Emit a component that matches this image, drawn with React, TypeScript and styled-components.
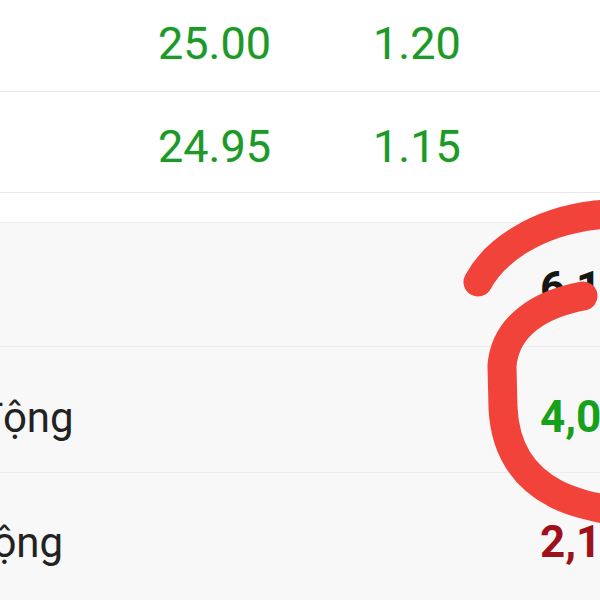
import React from "react";
import styled, { createGlobalStyle } from "styled-components";

const GlobalStyle = createGlobalStyle`
  html, body {
    margin: 0;
    padding: 0;
    background: #ffffff;
    overflow: hidden;
  }
  body {
    font-family: Roboto, "Liberation Sans", sans-serif;
  }
`;

const Screen = styled.div`
  position: relative;
  width: 600px;
  height: 600px;
  overflow: hidden;
  background: #ffffff;
`;

const QuoteTable = styled.div`
  display: flex;
  flex-direction: column;
  background: #ffffff;
`;

const QuoteRow = styled.div<{ $height: number; $padTop: number }>`
  display: grid;
  grid-template-columns: 158px 215px 1fr;
  box-sizing: border-box;
  height: ${({ $height }) => $height}px;
  padding-top: ${({ $padTop }) => $padTop}px;
  border-bottom: 1px solid #e9e9e9;
`;

const PriceCell = styled.span<{ $col: number }>`
  grid-column: ${({ $col }) => $col};
  font-size: 45px;
  line-height: normal;
  color: #1f972a;
  white-space: nowrap;
  text-shadow: 0 0 2px rgba(120, 230, 120, 0.45);
`;

const SectionGap = styled.div`
  height: 29px;
  background: #ffffff;
`;

const SummaryPanel = styled.div`
  display: flex;
  flex-direction: column;
  background: #f8f8f8;
  border-top: 1px solid #ececec;
  min-height: 400px;
`;

const SummaryRow = styled.div<{ $height: number; $padTop: number; $last?: boolean }>`
  display: grid;
  grid-template-columns: 74px 466px 1fr;
  align-items: baseline;
  box-sizing: border-box;
  height: ${({ $height }) => $height}px;
  padding-top: ${({ $padTop }) => $padTop}px;
  border-bottom: ${({ $last }) => ($last ? "none" : "1px solid #ececec")};
`;

const LabelClip = styled.div`
  display: flex;
  justify-content: flex-end;
  overflow: hidden;
`;

const LabelText = styled.span`
  flex: none;
  width: 268px;
  font-size: 42px;
  color: #222222;
  white-space: nowrap;
`;

const tones = {
  neutral: "#161616",
  up: "#16a01b",
  down: "#a0101a",
};

const Value = styled.span<{ $tone: keyof typeof tones }>`
  grid-column: 3;
  font-size: 44px;
  font-weight: 700;
  color: ${({ $tone }) => tones[$tone]};
  white-space: nowrap;
`;

const MarkerOverlay = styled.svg`
  position: absolute;
  left: 0;
  top: 0;
  width: 600px;
  height: 600px;
  pointer-events: none;
`;

const quotes = [
  { price: "25.00", change: "1.20", height: 92, padTop: 17 },
  { price: "24.95", change: "1.15", height: 101, padTop: 28 },
];

const summary = [
  { label: "Tổng", value: "6,152,300", tone: "neutral" as const, height: 124, padTop: 39 },
  { label: "Mua chủ động", value: "4,021,500", tone: "up" as const, height: 126, padTop: 44 },
  { label: "Bán chủ động", value: "2,130,800", tone: "down" as const, height: 130, padTop: 43 },
];

export default function App() {
  return (
    <Screen>
      <GlobalStyle />
      <QuoteTable>
        {quotes.map((q) => (
          <QuoteRow key={q.price} $height={q.height} $padTop={q.padTop}>
            <PriceCell $col={2}>{q.price}</PriceCell>
            <PriceCell $col={3}>{q.change}</PriceCell>
          </QuoteRow>
        ))}
      </QuoteTable>
      <SectionGap />
      <SummaryPanel>
        {summary.map((row, i) => (
          <SummaryRow
            key={row.label}
            $height={row.height}
            $padTop={row.padTop}
            $last={i === summary.length - 1}
          >
            <LabelClip>
              <LabelText>{row.label}</LabelText>
            </LabelClip>
            <Value $tone={row.tone}>{row.value}</Value>
          </SummaryRow>
        ))}
      </SummaryPanel>

      {/* hand-drawn red marker circling the totals */}
      <MarkerOverlay viewBox="0 0 600 600">
        <g fill="none" stroke="#f2433a" strokeWidth={29} strokeLinecap="round" strokeLinejoin="round">
          <path d="M478 282 C 494 252 535 222 596 215 L 630 212" />
          <path d="M583 296 C 540 304 505 326 502 366 L 503 408 C 505 448 522 476 556 494 C 572 502 590 507 630 514" />
        </g>
      </MarkerOverlay>
    </Screen>
  );
}
